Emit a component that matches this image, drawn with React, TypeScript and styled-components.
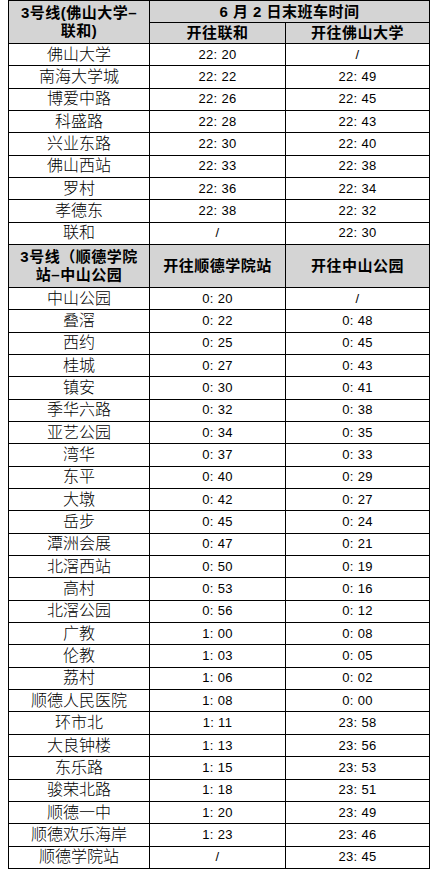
import React from "react";
import styled, { createGlobalStyle } from "styled-components";

const Global = createGlobalStyle`
  html, body { margin: 0; padding: 0; background: #fff; }
  body { margin: 0 0 0 8px; }
  * { box-sizing: border-box; }
`;

const Table = styled.div`
  display: grid;
  grid-template-columns: 141px 136px 144px;
  grid-template-rows: 22px 21px repeat(9, 22.333px) 43px repeat(26, 22.346px);
  width: 422px;
  border-top: 1px solid #000;
  border-left: 1px solid #000;
  font-family: "Liberation Sans", "Noto Sans CJK SC", sans-serif;
  color: #000;
`;

const Cell = styled.div<{ $col?: number; $row?: number }>`
  grid-column: span ${(p) => p.$col ?? 1};
  grid-row: span ${(p) => p.$row ?? 1};
  border-right: 1px solid #000;
  border-bottom: 1px solid #000;
  display: flex;
  align-items: center;
  justify-content: center;
  text-align: center;
  white-space: nowrap;
  overflow: hidden;
`;

const HeadCell = styled(Cell)`
  background: #d4d4d4;
  font-weight: 700;
  font-size: 15px;
  line-height: 18px;
  letter-spacing: 0.5px;
`;

const Station = styled(Cell)`
  font-size: 16px;
  font-weight: 300;
  line-height: 18px;
`;

const Time = styled(Cell)`
  font-size: 13px;
  letter-spacing: 0.3px;
  line-height: 16px;
`;

type Row = [string, string, string];

const northbound: Row[] = [
  ["佛山大学", "22: 20", "/"],
  ["南海大学城", "22: 22", "22: 49"],
  ["博爱中路", "22: 26", "22: 45"],
  ["科盛路", "22: 28", "22: 43"],
  ["兴业东路", "22: 30", "22: 40"],
  ["佛山西站", "22: 33", "22: 38"],
  ["罗村", "22: 36", "22: 34"],
  ["孝德东", "22: 38", "22: 32"],
  ["联和", "/", "22: 30"],
];

const southbound: Row[] = [
  ["中山公园", "0: 20", "/"],
  ["叠滘", "0: 22", "0: 48"],
  ["西约", "0: 25", "0: 45"],
  ["桂城", "0: 27", "0: 43"],
  ["镇安", "0: 30", "0: 41"],
  ["季华六路", "0: 32", "0: 38"],
  ["亚艺公园", "0: 34", "0: 35"],
  ["湾华", "0: 37", "0: 33"],
  ["东平", "0: 40", "0: 29"],
  ["大墩", "0: 42", "0: 27"],
  ["岳步", "0: 45", "0: 24"],
  ["潭洲会展", "0: 47", "0: 21"],
  ["北滘西站", "0: 50", "0: 19"],
  ["高村", "0: 53", "0: 16"],
  ["北滘公园", "0: 56", "0: 12"],
  ["广教", "1: 00", "0: 08"],
  ["伦教", "1: 03", "0: 05"],
  ["荔村", "1: 06", "0: 02"],
  ["顺德人民医院", "1: 08", "0: 00"],
  ["环市北", "1: 11", "23: 58"],
  ["大良钟楼", "1: 13", "23: 56"],
  ["东乐路", "1: 15", "23: 53"],
  ["骏荣北路", "1: 18", "23: 51"],
  ["顺德一中", "1: 20", "23: 49"],
  ["顺德欢乐海岸", "1: 23", "23: 46"],
  ["顺德学院站", "/", "23: 45"],
];

const Rows = ({ rows }: { rows: Row[] }) => (
  <>
    {rows.map(([s, a, b]) => (
      <React.Fragment key={s}>
        <Station>{s}</Station>
        <Time>{a}</Time>
        <Time>{b}</Time>
      </React.Fragment>
    ))}
  </>
);

export default function App() {
  return (
    <>
      <Global />
      <Table>
        <HeadCell $row={2}>
          3号线(佛山大学–
          <br />
          联和)
        </HeadCell>
        <HeadCell $col={2}>6 月 2 日末班车时间</HeadCell>
        <HeadCell>开往联和</HeadCell>
        <HeadCell>开往佛山大学</HeadCell>
        <Rows rows={northbound} />
        <HeadCell>
          3号线（顺德学院
          <br />
          站–中山公园
        </HeadCell>
        <HeadCell>开往顺德学院站</HeadCell>
        <HeadCell>开往中山公园</HeadCell>
        <Rows rows={southbound} />
      </Table>
    </>
  );
}
